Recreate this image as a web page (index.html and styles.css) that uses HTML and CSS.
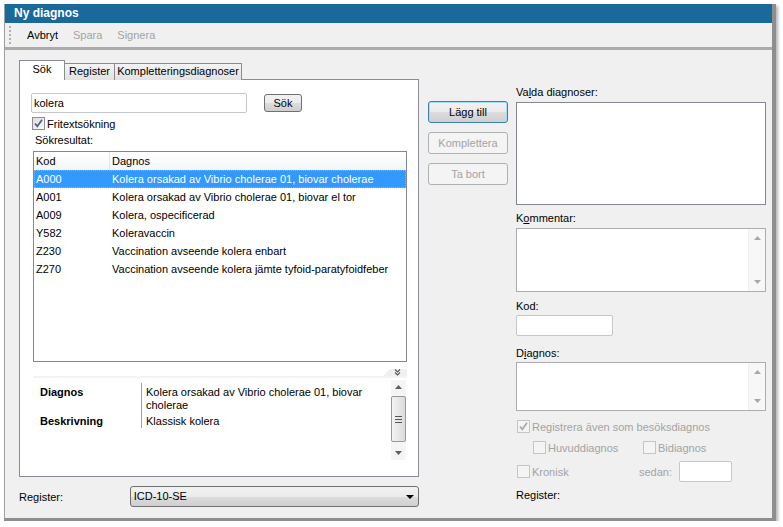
FILE: index.html
```html
<!DOCTYPE html>
<html lang="sv">
<head>
    <meta charset="UTF-8">
    <title>Ny diagnos</title>
    <link rel="stylesheet" href="styles.css">
</head>
<body>
    <div class="window">
        <div class="titlebar">Ny diagnos</div>
        <div class="toolbar">
            <span class="grip"></span>
            <span class="tool">Avbryt</span>
            <span class="tool disabled">Spara</span>
            <span class="tool disabled">Signera</span>
        </div>
        <div class="toolbar-edge"></div>

        <div class="content">
            <div class="left">
                <div class="tabs">
                    <div class="tab active tab-sok">Sök</div>
                    <div class="tab tab-reg">Register</div>
                    <div class="tab tab-komp">Kompletteringsdiagnoser</div>
                </div>
                <div class="tabpanel">
                    <div class="search-row">
                        <div class="input search-input">kolera</div>
                        <div class="btn btn-sok">Sök</div>
                    </div>
                    <div class="check-row fritext">
                        <span class="cb"><svg width="13" height="13" viewBox="0 0 13 13"><path d="M3 6.5 L5.3 9.3 L10 2.8" fill="none" stroke="#4a5f8c" stroke-width="1.7"/></svg></span>
                        Fritextsökning
                    </div>
                    <div class="label result-label">Sökresultat:</div>
                    <div class="list">
                        <div class="list-head">
                            <span class="col-kod">Kod</span>
                            <span class="col-diag">Dagnos</span>
                        </div>
                        <div class="list-row selected"><span class="col-kod">A000</span><span class="col-diag">Kolera orsakad av Vibrio cholerae 01, biovar cholerae</span></div>
                        <div class="list-row"><span class="col-kod">A001</span><span class="col-diag">Kolera orsakad av Vibrio cholerae 01, biovar el tor</span></div>
                        <div class="list-row"><span class="col-kod">A009</span><span class="col-diag">Kolera, ospecificerad</span></div>
                        <div class="list-row"><span class="col-kod">Y582</span><span class="col-diag">Koleravaccin</span></div>
                        <div class="list-row"><span class="col-kod">Z230</span><span class="col-diag">Vaccination avseende kolera enbart</span></div>
                        <div class="list-row"><span class="col-kod">Z270</span><span class="col-diag">Vaccination avseende kolera jämte tyfoid-paratyfoidfeber</span></div>
                    </div>
                    <div class="details">
                        <div class="pane-bar">
                            <span class="pane-toggle"><svg width="7" height="7" viewBox="0 0 7 7"><path d="M1 0.5 L3.5 3 L6 0.5 M1 3.5 L3.5 6 L6 3.5" fill="none" stroke="#555" stroke-width="1.1"/></svg></span>
                        </div>
                        <div class="pane-body">
                            <div class="props">
                                <div class="prop-name">Diagnos</div>
                                <div class="prop-value">Kolera orsakad av Vibrio cholerae 01, biovar cholerae</div>
                                <div class="prop-name second">Beskrivning</div>
                                <div class="prop-value second">Klassisk kolera</div>
                            </div>
                            <div class="vscroll">
                                <span class="arrow"><svg width="7" height="4" viewBox="0 0 7 4"><polygon points="0,4 3.5,0 7,4" fill="#606060"/></svg></span>
                                <span class="thumb"><span class="grip-lines"></span></span>
                                <span class="arrow down"><svg width="7" height="4" viewBox="0 0 7 4"><polygon points="0,0 3.5,4 7,0" fill="#606060"/></svg></span>
                            </div>
                        </div>
                    </div>
                </div>
                <div class="register-row">
                    <span class="register-label">Re<u>g</u>ister:</span>
                    <div class="combo">
                        ICD-10-SE
                        <svg class="combo-arrow" width="8" height="4" viewBox="0 0 8 4"><polygon points="0,0 4,4 8,0" fill="#000"/></svg>
                    </div>
                </div>
            </div>

            <div class="mid">
                <div class="btn btn-wide default">Lägg till</div>
                <div class="btn btn-wide disabled">Komplettera</div>
                <div class="btn btn-wide disabled">Ta bort</div>
            </div>

            <div class="right">
                <div class="label">Va<u>l</u>da diagnoser:</div>
                <div class="box valda"></div>

                <div class="label gap-kommentar">K<u>o</u>mmentar:</div>
                <div class="box textarea kommentar">
                    <div class="tscroll">
                        <svg width="7" height="4" viewBox="0 0 7 4"><polygon points="0,4 3.5,0 7,4" fill="#a8a8a8"/></svg>
                        <svg width="7" height="4" viewBox="0 0 7 4"><polygon points="0,0 3.5,4 7,0" fill="#a8a8a8"/></svg>
                    </div>
                </div>

                <div class="label gap-kod">Kod:</div>
                <div class="input kod-input"></div>

                <div class="label gap-diagnos">D<u>i</u>agnos:</div>
                <div class="box textarea diagnos">
                    <div class="tscroll">
                        <svg width="7" height="4" viewBox="0 0 7 4"><polygon points="0,4 3.5,0 7,4" fill="#a8a8a8"/></svg>
                        <svg width="7" height="4" viewBox="0 0 7 4"><polygon points="0,0 3.5,4 7,0" fill="#a8a8a8"/></svg>
                    </div>
                </div>

                <div class="check-row disabled besok">
                    <span class="cb"><svg width="13" height="13" viewBox="0 0 13 13"><path d="M3 6.5 L5.3 9.3 L10 2.8" fill="none" stroke="#a8a8a8" stroke-width="1.7"/></svg></span>
                    Registrera även som besöksdiagnos
                </div>
                <div class="check-row disabled typ-row">
                    <span class="cb"></span><span class="huvud">Huvuddiagnos</span>
                    <span class="cb"></span>Bidiagnos
                </div>
                <div class="check-row disabled kronisk-row">
                    <span class="cb"></span><span class="kronisk">Kronisk</span>
                    <span class="sedan">sedan:</span>
                    <div class="input sedan-input"></div>
                </div>
                <div class="label gap-register">Register:</div>
            </div>
        </div>
    </div>
</body>
</html>
```

FILE: styles.css
```css
body {
    margin: 0;
    background: #ffffff;
    font-family: "Liberation Sans", Arial, sans-serif;
    font-size: 11px;
    color: #000000;
}
.window {
    margin: 4px 0 0 4px;
    width: 767px;
    height: 514px;
    border-left: 1px solid #a0a0a0;
    border-right: 4px solid #8e8e8e;
    border-bottom: 3px solid #8e8e8e;
    background: #f0f0f0;
    display: flex;
    flex-direction: column;
    box-shadow: 2px 2px 3px rgba(0, 0, 0, 0.3);
}
.titlebar {
    height: 19px;
    line-height: 19px;
    padding-left: 9px;
    background: #19699a;
    color: white;
    font-weight: bold;
    font-size: 12px;
}
.toolbar {
    height: 24px;
    display: flex;
    align-items: center;
    padding-left: 4px;
}
.grip {
    height: 18px;
    border-left: 2px dotted #b0b0b0;
    margin-right: 16px;
}
.tool {
    margin-right: 15px;
}
.tool.disabled {
    color: #a3a3a3;
}
.toolbar-edge {
    height: 3px;
    background: #ababab;
}

.content {
    flex: 1;
    display: flex;
    padding: 10px 6px 0 14px;
}

/* left: tabs */
.left {
    width: 400px;
    display: flex;
    flex-direction: column;
}
.tabs {
    display: flex;
    height: 20px;
    margin-bottom: -1px;
    position: relative;
    z-index: 1;
}
.tab {
    box-sizing: border-box;
    height: 17px;
    margin-top: 3px;
    margin-left: -1px;
    border: 1px solid #898c95;
    border-bottom: none;
    background: linear-gradient(#f4f4f4, #e2e2e2);
    text-align: center;
    line-height: 15px;
}
.tab.active {
    height: 20px;
    margin-top: 0;
    margin-left: 0;
    background: #ffffff;
    line-height: 17px;
    position: relative;
    z-index: 2;
}
.tab-sok { width: 46px; }
.tab-reg { width: 51px; }
.tab-komp { width: 128px; }
.tabpanel {
    box-sizing: border-box;
    height: 398px;
    border: 1px solid #898c95;
    background: #ffffff;
    padding: 13px 11px 0;
}
.search-row {
    display: flex;
    align-items: center;
    height: 20px;
}
.input {
    box-sizing: border-box;
    height: 20px;
    line-height: 18px;
    padding-left: 2px;
    border: 1px solid #c3c6cc;
    border-radius: 2px;
    background: #ffffff;
}
.search-input {
    width: 216px;
}
.btn {
    box-sizing: border-box;
    border: 1px solid #707070;
    border-radius: 3px;
    background: linear-gradient(#f2f2f2 0%, #ebebeb 50%, #dddddd 51%, #cfcfcf 100%);
    text-align: center;
}
.btn-sok {
    width: 38px;
    height: 18px;
    line-height: 16px;
    margin-left: 17px;
}
.check-row {
    display: flex;
    align-items: center;
    height: 13px;
}
.cb {
    box-sizing: border-box;
    width: 13px;
    height: 13px;
    border: 1px solid #8f8f8f;
    background: linear-gradient(135deg, #dcdcdc, #fbfbfb);
    margin-right: 2px;
    display: inline-flex;
    flex-shrink: 0;
}
.cb svg {
    margin: -1px;
}
.fritext {
    margin-top: 4px;
    margin-left: 1px;
}
.label {
    height: 13px;
    line-height: 13px;
}
.result-label {
    margin-top: 4px;
    margin-left: 4px;
}

/* result list */
.list {
    box-sizing: border-box;
    margin-top: 4px;
    margin-left: 2px;
    width: 374px;
    height: 211px;
    border: 1px solid #828790;
    background: #ffffff;
}
.list-head,
.list-row {
    display: flex;
    height: 18px;
    line-height: 18px;
}
.list-head {
    background: linear-gradient(#ffffff, #f4f5f7);
}
.list-head .col-kod {
    border-right: 1px solid #e3e4e6;
}
.col-kod {
    box-sizing: border-box;
    width: 76px;
    padding-left: 2px;
}
.col-diag {
    padding-left: 2px;
    white-space: nowrap;
}
.list-row.selected {
    background: #3399ff;
    color: white;
    outline: 1px dotted #e0a050;
    outline-offset: -1px;
}

/* details pane */
.details {
    box-sizing: border-box;
    margin-top: 7px;
    margin-left: 2px;
    width: 374px;
    height: 93px;
}
.pane-bar {
    height: 7px;
    display: flex;
    justify-content: flex-end;
    border-bottom: 2px solid #f3f3f3;
}
.pane-toggle {
    width: 24px;
    height: 7px;
    background: #f0f0f0;
    clip-path: polygon(7px 0, 100% 0, 100% 100%, 0 100%);
    display: flex;
    justify-content: center;
    align-items: center;
    padding-left: 4px;
    box-sizing: border-box;
}
.pane-body {
    display: flex;
    height: 84px;
}
.props {
    flex: 1;
    display: grid;
    grid-template-columns: 102px 1fr;
    align-content: start;
    margin-top: 5px;
    margin-left: 7px;
    margin-right: 6px;
}
.prop-name {
    font-weight: bold;
    border-right: 1px solid #a0a0a0;
    padding-top: 3px;
    line-height: 13px;
}
.prop-value {
    padding: 3px 0 0 4px;
    line-height: 13px;
}
.prop-name.second,
.prop-value.second {
    padding-top: 3px;
}
.vscroll {
    margin-right: 1px;
    margin-top: 2px;
    width: 15px;
    height: 80px;
    background: #f5f5f5;
    display: flex;
    flex-direction: column;
    align-items: center;
}
.vscroll .arrow {
    height: 14px;
    display: flex;
    align-items: center;
}
.thumb {
    box-sizing: border-box;
    width: 15px;
    height: 46px;
    margin: 2px 0;
    border: 1px solid #979797;
    border-radius: 2px;
    background: linear-gradient(90deg, #f2f2f2, #dcdcdc);
    display: flex;
    justify-content: center;
    align-items: center;
}
.grip-lines {
    width: 7px;
    height: 7px;
    background: repeating-linear-gradient(#555 0 1px, transparent 1px 3px);
}
.vscroll .down {
    margin-top: auto;
}

.register-row {
    display: flex;
    align-items: center;
    margin-top: 9px;
    height: 21px;
}
.register-label {
    width: 111px;
}
.combo {
    box-sizing: border-box;
    width: 290px;
    height: 21px;
    line-height: 19px;
    padding-left: 3px;
    border: 1px solid #707070;
    border-radius: 3px;
    background: linear-gradient(#f2f2f2 0%, #ebebeb 50%, #dddddd 51%, #cfcfcf 100%);
    display: flex;
    align-items: center;
}
.combo-arrow {
    margin-left: auto;
    margin-right: 4px;
}

/* middle buttons */
.mid {
    width: 80px;
    margin-left: 9px;
    padding-top: 41px;
}
.btn-wide {
    height: 22px;
    line-height: 20px;
    margin-bottom: 9px;
}
.btn.default {
    border-color: #3c7fb1;
    box-shadow: inset 0 0 0 1px #a8dbf5;
}
.btn.disabled {
    border-color: #adb2b5;
    background: #f4f4f4;
    color: #a3a3a3;
}

/* right column */
.right {
    width: 250px;
    margin-left: 8px;
    padding-top: 26px;
}
.box {
    box-sizing: border-box;
    width: 250px;
    border: 1px solid #828790;
    background: #ffffff;
    margin-top: 3px;
}
.valda {
    height: 103px;
}
.textarea {
    border-color: #abadb3;
    display: flex;
    justify-content: flex-end;
}
.kommentar {
    height: 64px;
}
.diagnos {
    height: 49px;
    margin-top: 2px;
}
.tscroll {
    width: 16px;
    background: #f7f7f7;
    border-left: 1px solid #f0f0f0;
    display: flex;
    flex-direction: column;
    justify-content: space-between;
    align-items: center;
    padding: 7px 0;
}
.gap-kommentar { margin-top: 7px; }
.gap-kod { margin-top: 8px; }
.kod-input {
    width: 97px;
    height: 21px;
    margin-top: 2px;
}
.gap-diagnos { margin-top: 11px; }
.check-row.disabled {
    color: #a3a3a3;
}
.check-row.disabled .cb {
    border-color: #c5c5c5;
    background: #f4f4f4;
}
.besok {
    margin-top: 9px;
    margin-left: 1px;
}
.typ-row {
    margin-top: 8px;
    margin-left: 17px;
}
.huvud {
    width: 95px;
}
.kronisk-row {
    margin-top: 7px;
    margin-left: 1px;
    height: 21px;
}
.kronisk {
    width: 107px;
}
.sedan-input {
    width: 53px;
    height: 21px;
    margin-left: 7px;
    border-color: #c8c8c8;
}
.gap-register { margin-top: 7px; }
```
